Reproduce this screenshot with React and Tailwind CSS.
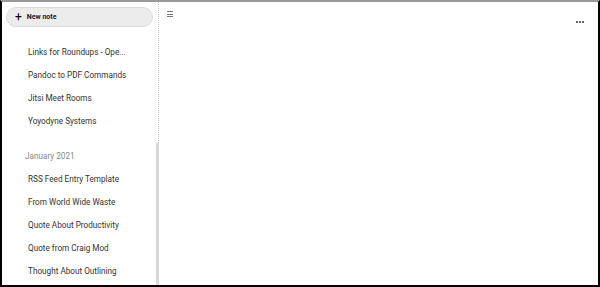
import React from "react";

const top = ["Links for Roundups - Ope...", "Pandoc to PDF Commands", "Jitsi Meet Rooms", "Yoyodyne Systems"];
const jan = ["RSS Feed Entry Template", "From World Wide Waste", "Quote About Productivity", "Quote from Craig Mod", "Thought About Outlining"];

export default function App() {
  return (
    <div className="w-[600px] h-[287px] bg-white border-t-2 border-t-[#9a9a9a] border-x-2 border-b-2 border-black flex overflow-hidden" style={{ fontFamily: "Roboto, 'Liberation Sans', sans-serif" }}>
      <aside className="w-[157px] shrink-0 border-r border-dotted border-[#cfcfcf] relative flex flex-col">
        <div className="pl-[4px] pr-[2px] pt-[5px]">
          <button className="w-[147px] h-[20px] rounded-full bg-[#ececec] border border-[#dcdcdc] flex items-center pl-[8px] gap-[5px] text-[7px] font-bold text-[#222]">
            <span className="text-[12px] leading-none font-normal text-black -mt-[1px]">+</span>
            <span>New note</span>
          </button>
        </div>
        <div className="flex flex-col text-[8.2px] text-[#333] pt-[14px]">
          {top.map((t) => (
            <div key={t} className="h-[23px] flex items-center pl-[26px]">{t}</div>
          ))}
          <div className="h-[23px] mt-[12px] flex items-center pl-[23px] text-[#888]">January 2021</div>
          {jan.map((t) => (
            <div key={t} className="h-[23px] flex items-center pl-[26px]">{t}</div>
          ))}
        </div>
        <div className="absolute right-[-1px] top-[141px] bottom-0 w-[3px] bg-[#d8d8d8]" />
      </aside>
      <main className="flex-1 relative">
        <div className="absolute left-[8px] top-[9px] flex flex-col gap-[1.5px]">
          <div className="w-[6px] h-[1px] bg-[#777]" />
          <div className="w-[6px] h-[1px] bg-[#777]" />
          <div className="w-[6px] h-[1px] bg-[#777]" />
        </div>
        <div className="absolute right-[14px] top-[19px] flex gap-[1px]">
          <div className="w-[2px] h-[2px] bg-[#666]" />
          <div className="w-[2px] h-[2px] bg-[#666]" />
          <div className="w-[2px] h-[2px] bg-[#666]" />
        </div>
      </main>
    </div>
  );
}
